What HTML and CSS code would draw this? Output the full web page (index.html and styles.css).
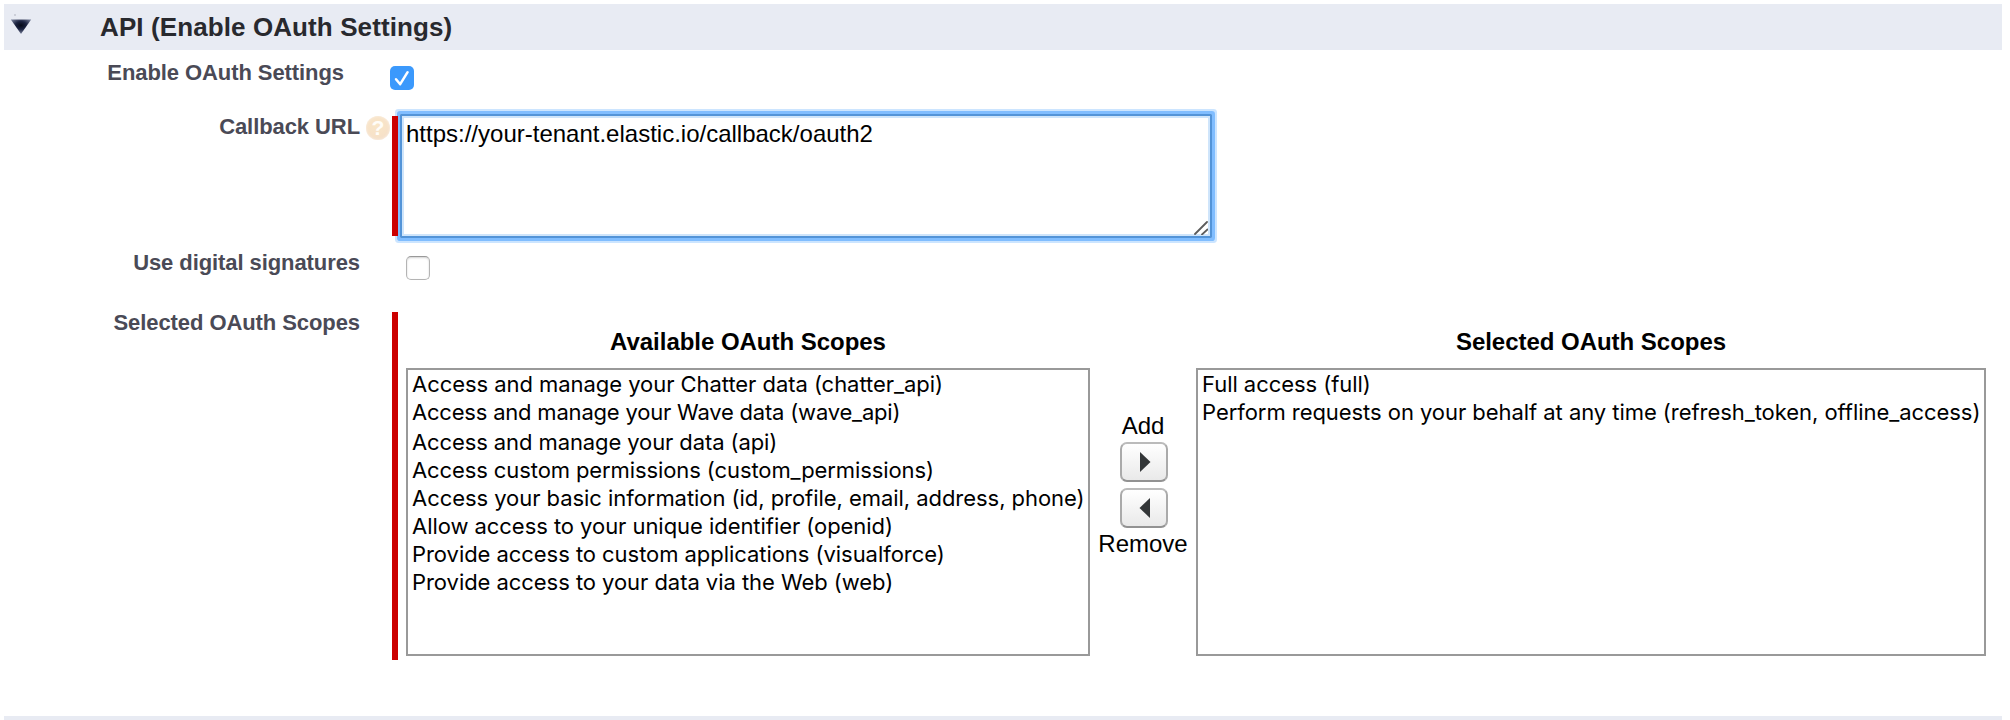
FILE: index.html
```html
<!DOCTYPE html>
<html lang="en">
<head>
<meta charset="utf-8">
<title>API (Enable OAuth Settings)</title>
<link rel="stylesheet" href="styles.css">
</head>
<body>
<main class="section">
  <header class="section-header">
    <svg class="twisty" width="22" height="22" viewBox="0 0 22 22" aria-hidden="true">
      <defs>
        <radialGradient id="twisty-fill" cx="0.5" cy="0.4" r="0.6">
          <stop offset="0" stop-color="#060a18"/><stop offset="0.45" stop-color="#1c2340"/><stop offset="1" stop-color="#7a829c"/>
        </radialGradient>
      </defs>
      <circle cx="5" cy="1" r="1" fill="#c3c6d0"/>
      <path d="M0.8 5.6H21.2L11 20Z" fill="url(#twisty-fill)"/>
    </svg>
    <h1 class="section-title">API (Enable OAuth Settings)</h1>
  </header>

  <div class="row row-enable">
    <label class="label label-enable">Enable OAuth Settings</label>
    <span class="check check-on">
      <svg width="24" height="24" viewBox="0 0 24 24" aria-hidden="true"><path d="M6 13.2L10.2 18.2L17.6 6.2" fill="none" stroke="#fff" stroke-width="2.5" stroke-linecap="round" stroke-linejoin="round"/></svg>
    </span>
  </div>

  <div class="row row-callback">
    <label class="label">Callback URL</label>
    <span class="help">?</span>
    <div class="required"></div>
    <div class="textarea">
      <span>https://your-tenant.elastic.io/callback/oauth2</span>
      <svg class="grip" width="14" height="14" viewBox="0 0 14 14" aria-hidden="true"><path d="M1 13L13 1M8 13.5L13.5 8.5" stroke="#5c5c5c" stroke-width="1.8" stroke-linecap="round"/></svg>
    </div>
  </div>

  <div class="row row-digital">
    <label class="label">Use digital signatures</label>
    <span class="check check-off"></span>
  </div>

  <div class="row row-scopes">
    <label class="label">Selected OAuth Scopes</label>
    <div class="required"></div>
    <div class="picker">
      <section class="pick-col pick-available">
        <h2 class="pick-title">Available OAuth Scopes</h2>
        <ul class="listbox">
          <li>Access and manage your Chatter data (chatter_api)</li>
          <li class="tightest">Access and manage your Wave data (wave_api)</li>
          <li class="tight nudged">Access and manage your data (api)</li>
          <li class="tight">Access custom permissions (custom_permissions)</li>
          <li>Access your basic information (id, profile, email, address, phone)</li>
          <li>Allow access to your unique identifier (openid)</li>
          <li>Provide access to custom applications (visualforce)</li>
          <li>Provide access to your data via the Web (web)</li>
        </ul>
      </section>
      <div class="transfer">
        <span class="add">Add</span>
        <button class="move" type="button" aria-label="Add"><svg width="12" height="22" viewBox="0 0 12 22"><path d="M1 1L11.5 11L1 21Z" fill="#333638"/></svg></button>
        <button class="move" type="button" aria-label="Remove"><svg width="12" height="22" viewBox="0 0 12 22"><path d="M11 1L0.5 11L11 21Z" fill="#333638"/></svg></button>
        <span>Remove</span>
      </div>
      <section class="pick-col pick-selected">
        <h2 class="pick-title">Selected OAuth Scopes</h2>
        <ul class="listbox">
          <li>Full access (full)</li>
          <li>Perform requests on your behalf at any time (refresh_token, offline_access)</li>
        </ul>
      </section>
    </div>
  </div>
  <div class="next-section"></div>
</main>
</body>
</html>
```

FILE: styles.css
```css
* { box-sizing: border-box; }
body { margin: 0; background: #fff; color: #000; font-family: "Liberation Sans", Arial, sans-serif; font-size: 22px; }
.section { width: 1998px; height: 720px; margin-left: 4px; padding-top: 4px; overflow: hidden; display: flex; flex-direction: column; }
.section-header { height: 46px; flex: none; background: #e8ebf3; display: flex; align-items: flex-start; padding-left: 6px; }
.twisty { margin-top: 10px; flex: none; }
.section-title { margin: 7px 0 0 68px; font-size: 26px; line-height: 32px; font-weight: bold; letter-spacing: 0.1px; color: #28292e; }
.row { display: flex; align-items: flex-start; flex: none; }
.label { width: 356px; padding-top: 1px; flex: none; text-align: right; font-weight: bold; line-height: 28px; letter-spacing: -0.08px; color: #4a4a56; }
.label-enable { width: 340px; }
.row-enable { height: 58px; padding-top: 8px; }
.check { width: 24px; height: 24px; flex: none; border-radius: 5px; }
.check svg { display: block; }
.check-on { margin: 8px 0 0 46px; background: #3b99fc; }
.check-off { margin: 8px 0 0 46px; border: 1px solid #b4b4b4; border-top-color: #999; background: #fff; box-shadow: inset 0 1px 2px rgba(0,0,0,.18); }
.row-callback { height: 140px; padding-top: 4px; }
.help { width: 24px; height: 24px; margin: 4px 0 0 6px; flex: none; border-radius: 50%; background: radial-gradient(circle at 45% 35%, #f9e6c8, #f7e2c8 55%, #f0dac8); color: #fffdf8; font-weight: bold; font-size: 21px; line-height: 24px; text-align: center; box-shadow: inset 0 0 3px #fbf3ea; }
.required { width: 6px; flex: none; background: #c00; position: relative; z-index: 1; }
.row-callback .required { height: 120px; margin: 4px 0 0 2px; }
.textarea { position: relative; width: 812px; height: 124px; margin: 2px 0 0 2px; border: 2px solid #5394d8; border-radius: 1px; padding: 4px; font-size: 24px; line-height: 28px; box-shadow: 0 0 0 3px #80bdff, 0 0 0 5px #cce5ff, inset 0 0 0 2px #cfe5fb; }
.grip { position: absolute; right: 2px; bottom: 1px; }
.row-digital { height: 64px; }
.row-scopes { height: 348px; }
.row-scopes .label { margin-top: -4px; }
.row-scopes .required { height: 348px; margin-left: 32px; }
.picker { display: flex; margin-left: 8px; }
.pick-available { width: 684px; }
.pick-selected { width: 790px; }
.pick-title { margin: 0; padding-top: 14px; height: 56px; font-size: 24px; line-height: 32px; letter-spacing: -0.03px; text-align: center; }
.listbox { margin: 0; padding: 0 0 0 4px; height: 288px; border: 2px solid #999; list-style: none; font-family: Inter, sans-serif; font-size: 22px; line-height: 28px; letter-spacing: -0.05px; white-space: nowrap; }
.nudged { margin-top: 2px; }
.tight { letter-spacing: -0.1px; }
.tightest { letter-spacing: -0.2px; }
.transfer { width: 106px; padding: 100px 0 0; display: flex; flex-direction: column; align-items: center; font-size: 24px; line-height: 28px; }
.add { margin-bottom: -2px; }
.move { width: 48px; height: 40px; margin: 4px 0 2px 1px; padding: 0; border: 2px solid #aaa; border-top-color: #bbb; border-bottom-color: #929292; border-radius: 7px; background: linear-gradient(#fff, #e9e9e9); display: flex; align-items: center; justify-content: center; flex: none; }
.move svg { margin-left: 2px; }
.next-section { height: 4px; margin-top: 56px; flex: none; background: #e8ebf3; }
```
